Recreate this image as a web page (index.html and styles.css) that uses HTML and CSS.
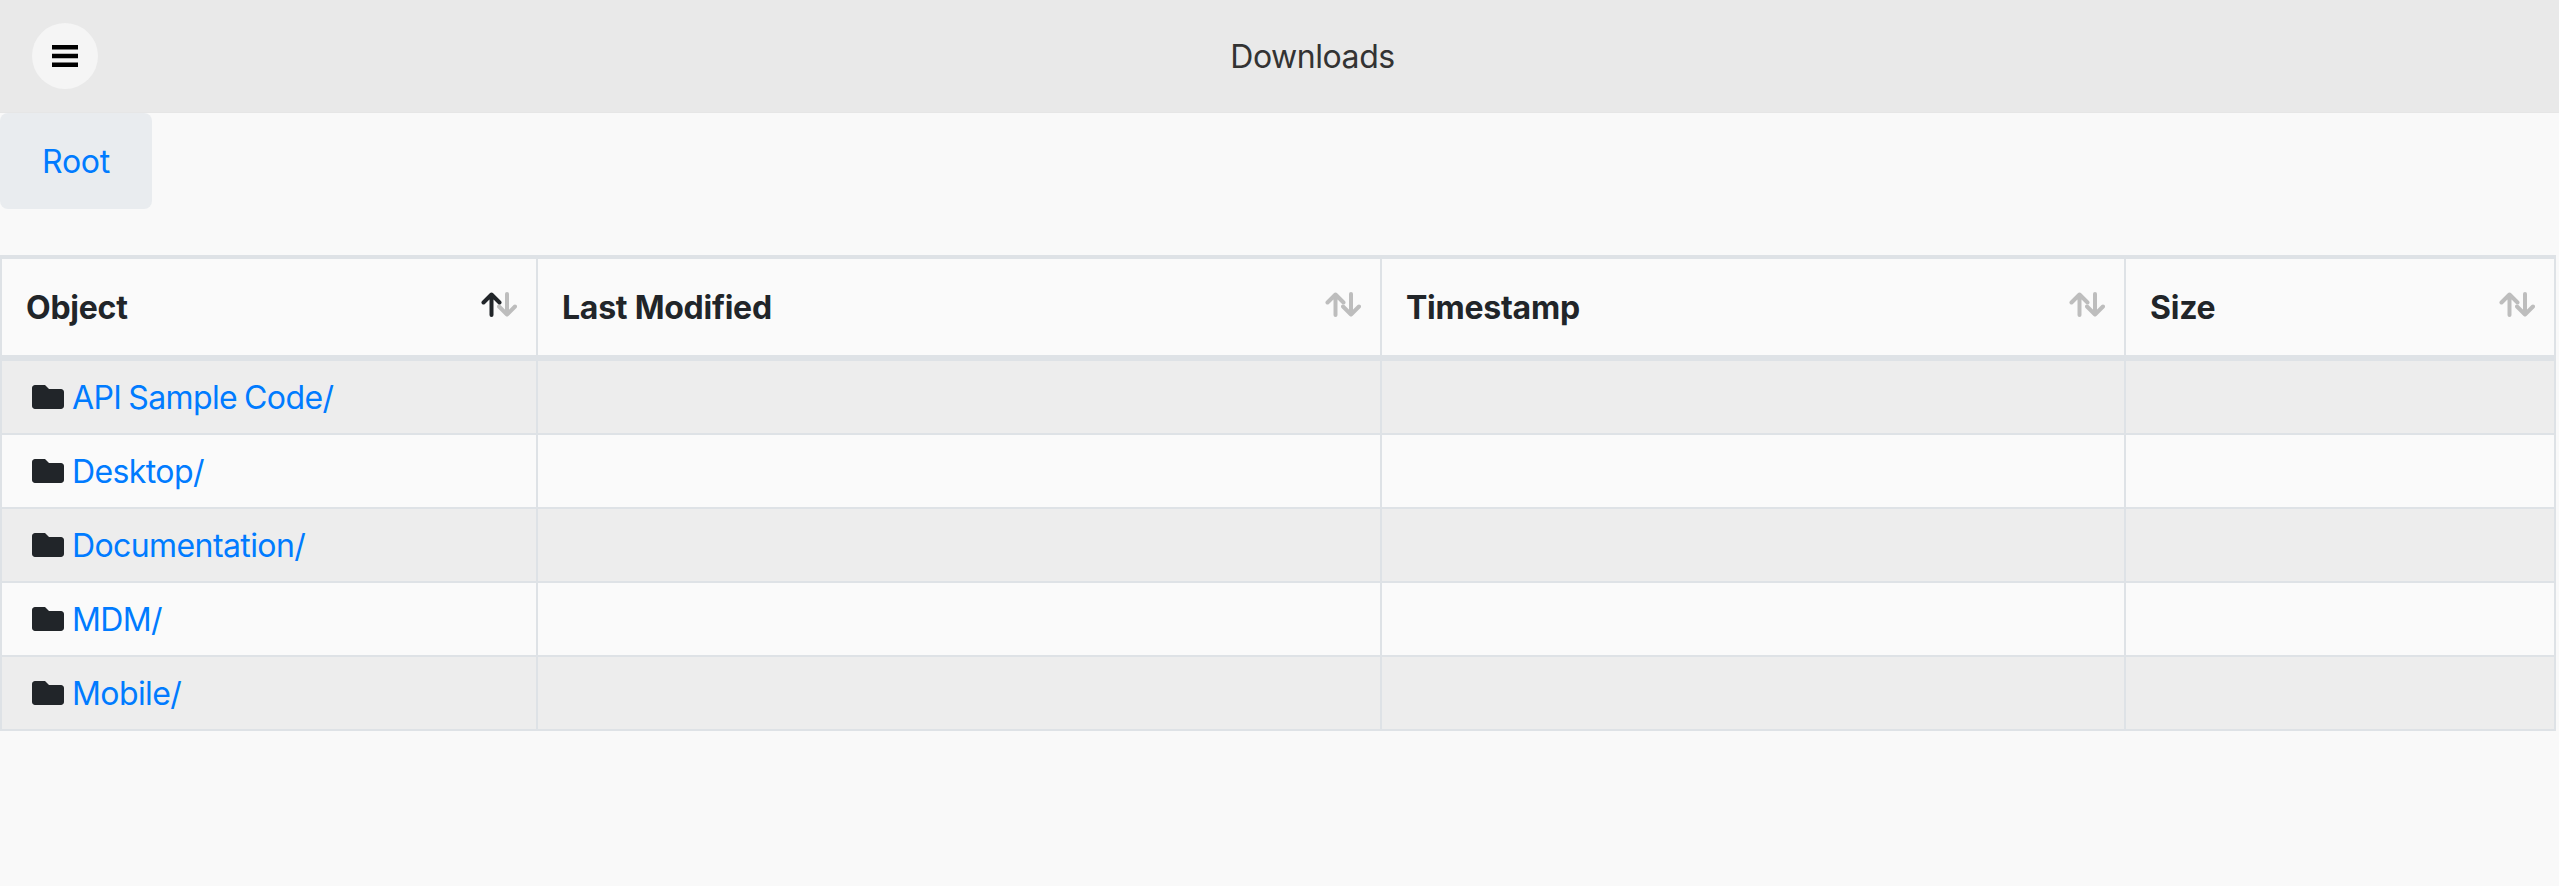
FILE: index.html
```html
<!DOCTYPE html>
<html lang="en">
<head>
<meta charset="utf-8">
<title>Downloads</title>
<link rel="stylesheet" href="styles.css">
</head>
<body>
<svg class="defs" aria-hidden="true">
  <symbol id="folder" viewBox="0 0 512 512"><path d="M464 128H272l-64-64H48C21.490 64 0 85.490 0 112v288c0 26.510 21.490 48 48 48h416c26.510 0 48-21.490 48-48V176c0-26.510-21.490-48-48-48z" fill="#212529"/></symbol>
  <symbol id="up" viewBox="0 0 21 25"><path d="M10.500 23V2.500M2.500 10.500 10.500 2.500 18.500 10.500" fill="none" stroke="currentColor" stroke-width="4" stroke-linecap="round" stroke-linejoin="round"/></symbol>
  <symbol id="down" viewBox="0 0 20 25"><path d="M10 2v20.500M2 14.500 10 22.500 18 14.500" fill="none" stroke="currentColor" stroke-width="4" stroke-linecap="round" stroke-linejoin="round"/></symbol>
</svg>
<header class="topbar">
  <button class="menu-btn" type="button" aria-label="Menu">
    <svg class="menu-icon" viewBox="0 0 26 22"><path d="M0 0h26v4.500H0zM0 8.750h26v4.500H0zM0 17.500h26V22H0z"/></svg>
  </button>
  <h1 class="title">Downloads</h1>
</header>
<nav class="crumbs"><a class="crumb" href="#">Root</a></nav>
<table class="listing">
  <colgroup><col class="c1"><col class="c2"><col class="c3"><col class="c4"></colgroup>
  <thead>
    <tr>
      <th>Object<span class="sort"><svg class="arrow up active"><use href="#up"/></svg><svg class="arrow down"><use href="#down"/></svg></span></th>
      <th>Last Modified<span class="sort"><svg class="arrow up"><use href="#up"/></svg><svg class="arrow down"><use href="#down"/></svg></span></th>
      <th>Timestamp<span class="sort"><svg class="arrow up"><use href="#up"/></svg><svg class="arrow down"><use href="#down"/></svg></span></th>
      <th>Size<span class="sort"><svg class="arrow up"><use href="#up"/></svg><svg class="arrow down"><use href="#down"/></svg></span></th>
    </tr>
  </thead>
  <tbody>
    <tr class="first"><td><svg class="folder"><use href="#folder"/></svg><a href="#">API Sample Code/</a></td><td></td><td></td><td></td></tr>
    <tr><td><svg class="folder"><use href="#folder"/></svg><a href="#">Desktop/</a></td><td></td><td></td><td></td></tr>
    <tr><td><svg class="folder"><use href="#folder"/></svg><a href="#">Documentation/</a></td><td></td><td></td><td></td></tr>
    <tr><td><svg class="folder"><use href="#folder"/></svg><a href="#">MDM/</a></td><td></td><td></td><td></td></tr>
    <tr><td><svg class="folder"><use href="#folder"/></svg><a href="#">Mobile/</a></td><td></td><td></td><td></td></tr>
  </tbody>
</table>
</body>
</html>
```
FILE: styles.css
```css
* { box-sizing: border-box; }
html, body { height: 100%; }
body {
  margin: 0;
  background: #f9f9f9;
  color: #212529;
  font-family: Inter, "Liberation Sans", sans-serif;
  font-size: 32px;
  overflow: hidden;
}
a { color: #007bff; text-decoration: none; letter-spacing: -0.6px; word-spacing: -1.5px; }
.defs { display: none; }
.topbar {
  height: 113px;
  background: #e9e9e9;
  border-bottom: 1px solid #e6e6e6;
  display: flex;
  align-items: center;
  padding-left: 32px;
}
.menu-btn {
  width: 66px;
  height: 66px;
  border-radius: 50%;
  border: 0;
  padding: 0;
  background: #f5f5f5;
  display: flex;
  align-items: center;
  justify-content: center;
}
.menu-icon { width: 26px; height: 22px; fill: #000; }
.title {
  margin: 0;
  flex: 1;
  text-align: center;
  font-size: 32px;
  font-weight: 400;
  letter-spacing: -0.45px;
  color: #333;
  padding-right: 32px;
}
.crumbs { height: 142px; }
.crumb {
  display: flex;
  align-items: center;
  justify-content: center;
  width: 152px;
  height: 96px;
  background: #e9ecef;
  border-radius: 8px;
  letter-spacing: -0.3px;
}
.listing {
  border-collapse: collapse;
  table-layout: fixed;
  width: 2554px;
}
.c1 { width: 536px; }
.c2 { width: 844px; }
.c3 { width: 744px; }
.c4 { width: 430px; }
th, td { border: 2px solid #dee2e6; padding: 0; background: #fafafa; }
thead th {
  position: relative;
  height: 101px;
  text-align: left;
  padding-left: 24px;
  font-weight: 700;
  letter-spacing: -0.25px;
  border-top-width: 4px;
  border-bottom-width: 6px;
}
tbody td { height: 74px; padding-left: 30px; vertical-align: middle; }
tbody .first td { height: 76px; }
tbody tr:nth-child(odd) td { background: #ededed; }
.folder { width: 32px; height: 32px; margin-right: 8px; vertical-align: -4px; }
.sort {
  position: absolute;
  top: 33px;
  right: 19px;
  display: flex;
}
.arrow { height: 25px; color: #bdbdbd; display: block; }
.arrow.up { width: 21px; }
.arrow.down { width: 20px; margin-left: -5px; }
.arrow.active { color: #212529; position: relative; z-index: 1; }
```
